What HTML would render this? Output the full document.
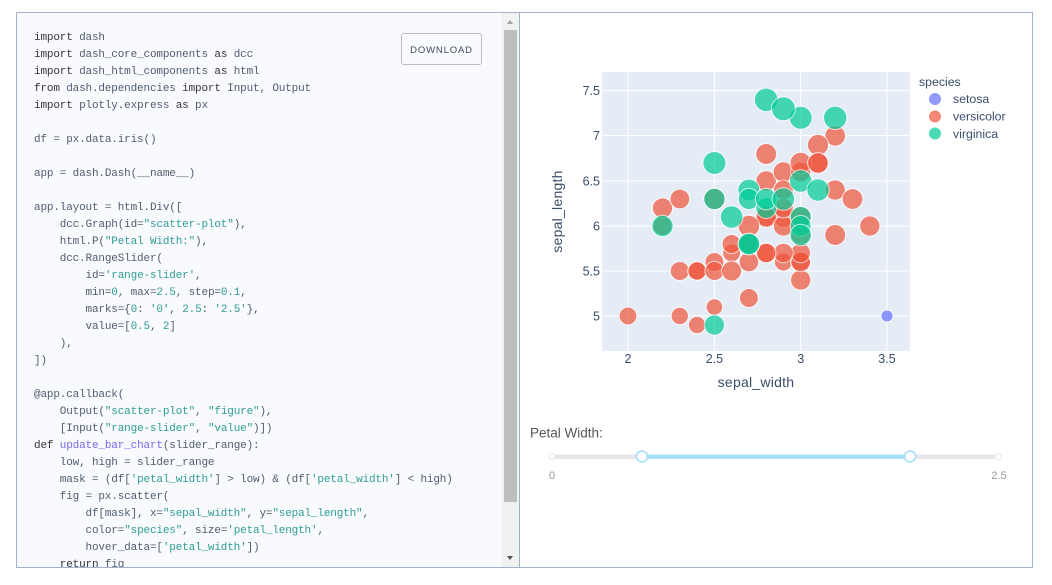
<!DOCTYPE html>
<html><head><meta charset="utf-8"><style>
html,body{margin:0;padding:0;background:#fff;width:1052px;height:585px;overflow:hidden}
#box{position:absolute;left:16px;top:12px;width:1015px;height:554px;border:1px solid #a3b1c9;overflow:hidden;background:#fff}
#left{position:absolute;left:0;top:0;width:485px;height:554px;background:#f9fafd;overflow:hidden}
pre{position:absolute;left:17px;top:17px;margin:0;font:11px/17px "Liberation Mono",monospace;letter-spacing:-.16px;color:#4f5d70}
.k{color:#35353f}.s{color:#2f9c94}.f{color:#7469ee}
#sb{position:absolute;left:485px;top:0;width:17px;height:554px;background:#f1f1f1}
#th{position:absolute;left:2px;top:17px;width:13px;height:472px;background:#bdbdbd}
#up{position:absolute;left:5px;top:7px;border:3.5px solid transparent;border-top:0;border-bottom:4px solid #a3a3a3}
#dn{position:absolute;left:5px;top:543px;border:3.5px solid transparent;border-bottom:0;border-top:4px solid #505050}
#div{position:absolute;left:502px;top:0;width:1px;height:554px;background:#a3b1c9}
#btn{position:absolute;left:384px;top:20px;width:79px;height:30px;border:1px solid #b9bbbf;border-radius:3px;font:normal 9.500px/33px "Liberation Sans",sans-serif;letter-spacing:.85px;text-align:center;color:#3f4a5c}
svg{position:absolute;left:0;top:0}
svg text{font-family:"Liberation Sans",sans-serif;fill:#3a4d6c}
.g{stroke:#fff;stroke-width:1}
circle.a,circle.b,circle.c{opacity:.7;stroke:#fff;stroke-width:1}
.a{fill:#636efa}.b{fill:#ef553b}.c{fill:#00cc96}
</style></head><body>
<div id="box">
<div id="left">
<pre><span class="k">import</span> dash
<span class="k">import</span> dash_core_components <span class="k">as</span> dcc
<span class="k">import</span> dash_html_components <span class="k">as</span> html
<span class="k">from</span> dash.dependencies <span class="k">import</span> Input, Output
<span class="k">import</span> plotly.express <span class="k">as</span> px

df = px.data.iris()

app = dash.Dash(__name__)

app.layout = html.Div([
    dcc.Graph(id=<span class="s">"scatter-plot"</span>),
    html.P(<span class="s">"Petal Width:"</span>),
    dcc.RangeSlider(
        id=<span class="s">'range-slider'</span>,
        min=<span class="s">0</span>, max=<span class="s">2.5</span>, step=<span class="s">0.1</span>,
        marks={<span class="s">0</span>: <span class="s">'0'</span>, <span class="s">2.5</span>: <span class="s">'2.5'</span>},
        value=[<span class="s">0.5</span>, <span class="s">2</span>]
    ),
])

@app.callback(
    Output(<span class="s">"scatter-plot"</span>, <span class="s">"figure"</span>),
    [Input(<span class="s">"range-slider"</span>, <span class="s">"value"</span>)])
<span class="k">def</span> <span class="f">update_bar_chart</span>(slider_range):
    low, high = slider_range
    mask = (df[<span class="s">'petal_width'</span>] &gt; low) &amp; (df[<span class="s">'petal_width'</span>] &lt; high)
    fig = px.scatter(
        df[mask], x=<span class="s">"sepal_width"</span>, y=<span class="s">"sepal_length"</span>,
        color=<span class="s">"species"</span>, size=<span class="s">'petal_length'</span>,
        hover_data=[<span class="s">'petal_width'</span>])
    <span class="k">return</span> fig
</pre>
<div id="btn">DOWNLOAD</div>
</div>
<div id="sb"><div id="up"></div><div id="th"></div><div id="dn"></div></div>
<div id="div"></div>
</div>
<svg width="1052" height="585" viewBox="0 0 1052 585">
<rect x="602" y="72" width="308" height="279" fill="#e5ecf6"/>
<g class="g">
<path d="M628 72V351M714.4 72V351M800.7 72V351M887 72V351M602 316H910M602 271H910M602 226H910M602 181H910M602 135.5H910M602 90.5H910" fill="none"/>
</g>
<g>
<circle class="a" cx="887" cy="316" r="6.05"/>
<circle class="b" cx="835.2" cy="135.8" r="10.36"/>
<circle class="b" cx="835.2" cy="190" r="10.14"/>
<circle class="b" cx="818" cy="145" r="10.58"/>
<circle class="b" cx="679.8" cy="271" r="9.56"/>
<circle class="b" cx="766.2" cy="181" r="10.26"/>
<circle class="b" cx="766.2" cy="253" r="10.14"/>
<circle class="b" cx="852.5" cy="199" r="10.36"/>
<circle class="b" cx="697.1" cy="325" r="8.69"/>
<circle class="b" cx="783.4" cy="172" r="10.26"/>
<circle class="b" cx="748.9" cy="298" r="9.44"/>
<circle class="b" cx="628" cy="316" r="8.94"/>
<circle class="b" cx="800.7" cy="235" r="9.8"/>
<circle class="b" cx="662.5" cy="226" r="9.56"/>
<circle class="b" cx="783.4" cy="217" r="10.36"/>
<circle class="b" cx="783.4" cy="262" r="9.07"/>
<circle class="b" cx="818" cy="163" r="10.03"/>
<circle class="b" cx="800.7" cy="262" r="10.14"/>
<circle class="b" cx="748.9" cy="244" r="9.68"/>
<circle class="b" cx="662.5" cy="208" r="10.14"/>
<circle class="b" cx="714.4" cy="262" r="9.44"/>
<circle class="b" cx="835.2" cy="235" r="10.47"/>
<circle class="b" cx="766.2" cy="217" r="9.56"/>
<circle class="b" cx="714.4" cy="199" r="10.58"/>
<circle class="b" cx="766.2" cy="217" r="10.36"/>
<circle class="b" cx="783.4" cy="190" r="9.91"/>
<circle class="b" cx="800.7" cy="172" r="10.03"/>
<circle class="b" cx="766.2" cy="154" r="10.47"/>
<circle class="b" cx="800.7" cy="163" r="10.69"/>
<circle class="b" cx="783.4" cy="226" r="10.14"/>
<circle class="b" cx="731.6" cy="253" r="8.94"/>
<circle class="b" cx="697.1" cy="271" r="9.32"/>
<circle class="b" cx="697.1" cy="271" r="9.2"/>
<circle class="b" cx="748.9" cy="244" r="9.44"/>
<circle class="b" cx="748.9" cy="226" r="10.8"/>
<circle class="b" cx="800.7" cy="280" r="10.14"/>
<circle class="b" cx="869.8" cy="226" r="10.14"/>
<circle class="b" cx="818" cy="163" r="10.36"/>
<circle class="b" cx="679.8" cy="199" r="9.91"/>
<circle class="b" cx="800.7" cy="262" r="9.68"/>
<circle class="b" cx="714.4" cy="271" r="9.56"/>
<circle class="b" cx="731.6" cy="271" r="10.03"/>
<circle class="b" cx="800.7" cy="217" r="10.26"/>
<circle class="b" cx="731.6" cy="244" r="9.56"/>
<circle class="b" cx="679.8" cy="316" r="8.69"/>
<circle class="b" cx="748.9" cy="262" r="9.8"/>
<circle class="b" cx="800.7" cy="253" r="9.8"/>
<circle class="b" cx="783.4" cy="253" r="9.8"/>
<circle class="b" cx="783.4" cy="208" r="9.91"/>
<circle class="b" cx="714.4" cy="307" r="8.28"/>
<circle class="b" cx="766.2" cy="253" r="9.68"/>
<circle class="c" cx="748.9" cy="244" r="10.8"/>
<circle class="c" cx="714.4" cy="325" r="10.14"/>
<circle class="c" cx="714.4" cy="163" r="11.51"/>
<circle class="c" cx="748.9" cy="190" r="11"/>
<circle class="c" cx="800.7" cy="181" r="11.21"/>
<circle class="c" cx="662.5" cy="226" r="10.69"/>
<circle class="c" cx="748.9" cy="199" r="10.58"/>
<circle class="c" cx="835.2" cy="117.8" r="11.71"/>
<circle class="c" cx="766.2" cy="208" r="10.47"/>
<circle class="c" cx="800.7" cy="217" r="10.58"/>
<circle class="c" cx="800.7" cy="117.8" r="11.51"/>
<circle class="c" cx="766.2" cy="99.8" r="11.81"/>
<circle class="c" cx="766.2" cy="199" r="10.8"/>
<circle class="c" cx="731.6" cy="217" r="11.31"/>
<circle class="c" cx="800.7" cy="226" r="10.47"/>
<circle class="c" cx="818" cy="190" r="11.21"/>
<circle class="c" cx="800.7" cy="235" r="10.8"/>
<circle class="c" cx="714.4" cy="199" r="10.69"/>
<circle class="c" cx="783.4" cy="108.8" r="12"/>
<circle class="c" cx="748.9" cy="244" r="10.8"/>
<circle class="c" cx="783.4" cy="199" r="11.31"/>
</g>
<g font-size="12.5" text-anchor="end">
<text x="600" y="95">7.5</text><text x="600" y="140">7</text><text x="600" y="185.500">6.5</text><text x="600" y="230.500">6</text><text x="600" y="275.500">5.5</text><text x="600" y="320.500">5</text>
</g>
<g font-size="12.500" text-anchor="middle">
<text x="628" y="363">2</text><text x="714.4" y="363">2.5</text><text x="800.7" y="363">3</text><text x="887" y="363">3.5</text>
</g>
<text x="756" y="387" font-size="14" text-anchor="middle" letter-spacing=".25">sepal_width</text>
<text transform="translate(562 211.5) rotate(-90)" font-size="14" text-anchor="middle" letter-spacing=".25">sepal_length</text>
<text x="919" y="86" font-size="12.3">species</text>
<circle class="a" cx="935" cy="99" r="6" style="stroke:none"/><text x="953" y="103" font-size="12.300">setosa</text>
<circle class="b" cx="935" cy="116.500" r="6" style="stroke:none"/><text x="953" y="120.500" font-size="12.300">versicolor</text>
<circle class="c" cx="935" cy="133.500" r="6" style="stroke:none"/><text x="953" y="138" font-size="12.300">virginica</text>
<text x="530" y="437.500" font-size="13.500" style="fill:#555">Petal Width:</text>
<rect x="552" y="454.500" width="446" height="4.500" fill="#e6e6e6"/>
<rect x="642" y="454.500" width="268" height="4.500" fill="#a6dff9"/>
<circle cx="552" cy="456.500" r="3" fill="#fff" stroke="#e6e6e6" stroke-width="1"/>
<circle cx="998" cy="456.500" r="3" fill="#fff" stroke="#e6e6e6" stroke-width="1"/>
<circle cx="642" cy="456.500" r="5.500" fill="#fff" stroke="#a0dcf8" stroke-width="1.500"/>
<circle cx="910" cy="456.500" r="5.500" fill="#fff" stroke="#a0dcf8" stroke-width="1.500"/>
<text x="552" y="479" font-size="11" text-anchor="middle" style="fill:#999">0</text>
<text x="999" y="479" font-size="11" text-anchor="middle" style="fill:#999">2.5</text>
</svg>
</body></html>
